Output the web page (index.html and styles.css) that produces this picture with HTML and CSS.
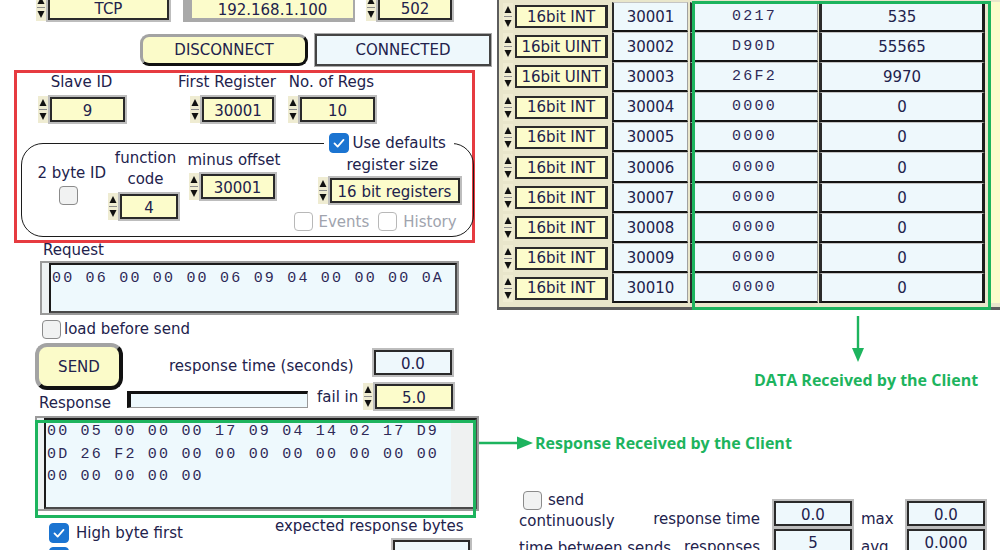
FILE: index.html
```html
<!DOCTYPE html>
<html lang="en">
<head>
  <meta charset="UTF-8">
  <title>Modbus Master</title>
  <link rel="stylesheet" href="styles.css">
</head>
<body>
  <!-- shared glyphs: numeric spinner arrows and the checkbox tick -->
  <svg class="defs" width="0" height="0">
    <symbol id="arrows" viewBox="0 0 10 27">
      <rect width="10" height="27" fill="#efecd2"/>
      <polygon points="1.5,10 5,3 8.5,10" fill="#111"/>
      <line x1="1" y1="13.5" x2="9" y2="13.5" stroke="#8a8a8a"/>
      <polygon points="1.5,17 8.5,17 5,24" fill="#111"/>
    </symbol>
    <symbol id="tick" viewBox="0 0 20 20">
      <polyline points="5,10.5 8.5,14 15,6.5" fill="none" stroke="#fff" stroke-width="2" stroke-linecap="round" stroke-linejoin="round"/>
    </symbol>
  </svg>

  <div class="panel">
    <div class="left">
      <div class="conn-row">
        <svg class="spin"><use href="#arrows" width="100%" height="100%"/></svg>
        <div class="field tcp">TCP</div>
        <div class="ipbox">192.168.1.100</div>
        <svg class="spin port-spin"><use href="#arrows" width="100%" height="100%"/></svg>
        <div class="field port">502</div>
      </div>

      <div class="btn-row">
        <button class="btn disconnect">DISCONNECT</button>
        <div class="status">CONNECTED</div>
      </div>

      <section class="settings">
        <div class="reg-row">
          <div class="reg slave">
            <label>Slave ID</label>
            <div class="num"><svg class="spin"><use href="#arrows" width="100%" height="100%"/></svg><div class="field w75">9</div></div>
          </div>
          <div class="reg first">
            <label>First Register</label>
            <div class="num"><svg class="spin"><use href="#arrows" width="100%" height="100%"/></svg><div class="field w72">30001</div></div>
          </div>
          <div class="reg count">
            <label>No. of Regs</label>
            <div class="num"><svg class="spin"><use href="#arrows" width="100%" height="100%"/></svg><div class="field w75">10</div></div>
          </div>
        </div>

        <fieldset class="options">
          <legend><span class="cb on"><svg><use href="#tick" width="100%" height="100%"/></svg></span>Use defaults</legend>
          <div class="opts">
            <div class="byte">
              <label>2 byte ID</label>
              <span class="cb"></span>
            </div>
            <div class="func">
              <label>function<br>code</label>
              <div class="num"><svg class="spin"><use href="#arrows" width="100%" height="100%"/></svg><div class="field w58">4</div></div>
            </div>
            <div class="offset">
              <label>minus offset</label>
              <div class="num"><svg class="spin"><use href="#arrows" width="100%" height="100%"/></svg><div class="field w74">30001</div></div>
            </div>
            <div class="size">
              <label>register size</label>
              <div class="num"><svg class="spin"><use href="#arrows" width="100%" height="100%"/></svg><div class="field w130">16 bit registers</div></div>
              <div class="checks">
                <span class="cb off"></span><span class="events">Events</span>
                <span class="cb off"></span><span>History</span>
              </div>
            </div>
          </div>
        </fieldset>
      </section>

      <label class="req-label">Request</label>
      <div class="textbox request">
        <div class="text"><div class="lines">00 06 00 00 00 06 09 04 00 00 00 0A</div></div>
      </div>

      <div class="load"><span class="cb"></span>load before send</div>

      <div class="send-row">
        <button class="btn send">SEND</button>
        <span class="caption">response time (seconds)</span>
        <div class="field blue w78">0.0</div>
      </div>

      <div class="resp-row">
        <span class="caption">Response</span>
        <div class="bar"></div>
        <span class="fail">fail in</span>
        <div class="num"><svg class="spin"><use href="#arrows" width="100%" height="100%"/></svg><div class="field w78">5.0</div></div>
      </div>

      <div class="resp-wrap">
        <div class="textbox response">
          <div class="text">
            <div class="lines">00 05 00 00 00 17 09 04 14 02 17 D9
0D 26 F2 00 00 00 00 00 00 00 00 00
00 00 00 00 00</div>
            <div class="gutter"></div>
          </div>
        </div>
        <div class="hilite resp-hilite"></div>
      </div>

      <div class="bottom-row">
        <div class="byte-order">
          <div class="check"><span class="cb on"><svg><use href="#tick" width="100%" height="100%"/></svg></span>High byte first</div>
          <span class="cb on second"><svg><use href="#tick" width="100%" height="100%"/></svg></span>
        </div>
        <div class="expect">
          <span>expected response bytes</span>
          <div class="field blue w77"></div>
        </div>
      </div>
    </div>

    <div class="right">
      <div class="regs">
        <div class="reg-line"><svg class="spin"><use href="#arrows" width="100%" height="100%"/></svg><div class="type">16bit INT</div><div class="cell addr">30001</div><div class="cell hex">0217</div><div class="cell dec">535</div><div class="more"></div></div>
        <div class="reg-line"><svg class="spin"><use href="#arrows" width="100%" height="100%"/></svg><div class="type">16bit UINT</div><div class="cell addr">30002</div><div class="cell hex">D90D</div><div class="cell dec">55565</div><div class="more"></div></div>
        <div class="reg-line"><svg class="spin"><use href="#arrows" width="100%" height="100%"/></svg><div class="type">16bit UINT</div><div class="cell addr">30003</div><div class="cell hex">26F2</div><div class="cell dec">9970</div><div class="more"></div></div>
        <div class="reg-line"><svg class="spin"><use href="#arrows" width="100%" height="100%"/></svg><div class="type">16bit INT</div><div class="cell addr">30004</div><div class="cell hex">0000</div><div class="cell dec">0</div><div class="more"></div></div>
        <div class="reg-line"><svg class="spin"><use href="#arrows" width="100%" height="100%"/></svg><div class="type">16bit INT</div><div class="cell addr">30005</div><div class="cell hex">0000</div><div class="cell dec">0</div><div class="more"></div></div>
        <div class="reg-line"><svg class="spin"><use href="#arrows" width="100%" height="100%"/></svg><div class="type">16bit INT</div><div class="cell addr">30006</div><div class="cell hex">0000</div><div class="cell dec">0</div><div class="more"></div></div>
        <div class="reg-line"><svg class="spin"><use href="#arrows" width="100%" height="100%"/></svg><div class="type">16bit INT</div><div class="cell addr">30007</div><div class="cell hex">0000</div><div class="cell dec">0</div><div class="more"></div></div>
        <div class="reg-line"><svg class="spin"><use href="#arrows" width="100%" height="100%"/></svg><div class="type">16bit INT</div><div class="cell addr">30008</div><div class="cell hex">0000</div><div class="cell dec">0</div><div class="more"></div></div>
        <div class="reg-line"><svg class="spin"><use href="#arrows" width="100%" height="100%"/></svg><div class="type">16bit INT</div><div class="cell addr">30009</div><div class="cell hex">0000</div><div class="cell dec">0</div><div class="more"></div></div>
        <div class="reg-line"><svg class="spin"><use href="#arrows" width="100%" height="100%"/></svg><div class="type">16bit INT</div><div class="cell addr">30010</div><div class="cell hex">0000</div><div class="cell dec">0</div><div class="more"></div></div>
        <div class="hilite data-hilite"></div>
      </div>

      <div class="data-note">
        <svg class="down" viewBox="0 0 14 46">
          <line x1="7" y1="0" x2="7" y2="34" stroke="#1db45e" stroke-width="2.4"/>
          <polygon points="1,32 13,32 7,46" fill="#1db45e"/>
        </svg>
        <div class="note">DATA Received by the Client</div>
      </div>

      <div class="resp-note">
        <svg class="side" viewBox="0 0 55 14">
          <line x1="0" y1="7" x2="41" y2="7" stroke="#1db45e" stroke-width="2.4"/>
          <polygon points="39,0.5 55,7 39,13.5" fill="#1db45e"/>
        </svg>
        <div class="note">Response Received by the Client</div>
      </div>

      <div class="stats">
        <div class="repeat">
          <div class="check"><span class="cb"></span>send</div>
          <div class="cont">continuously</div>
          <div class="between">time between sends</div>
        </div>
        <div class="times">
          <span class="lbl">response time</span>
          <div class="field blue">0.0</div>
          <span class="lbl">max</span>
          <div class="field blue">0.0</div>
          <span class="lbl">responses</span>
          <div class="field blue">5</div>
          <span class="lbl">avg</span>
          <div class="field blue">0.000</div>
        </div>
      </div>
    </div>
  </div>
</body>
</html>
```

FILE: styles.css
```css
body {
  margin: 0;
  width: 1000px;
  height: 550px;
  overflow: hidden;
  background: #fff;
  font-family: "DejaVu Sans", sans-serif;
  font-size: 15px;
  line-height: 18px;
  color: #22224c;
}
.defs {
  position: absolute;
}
.panel {
  display: flex;
}
.left {
  width: 497px;
  flex: none;
}
.right {
  flex: 1;
  min-width: 0;
}

/* numeric controls */
.spin {
  width: 10px;
  height: 27px;
  flex: none;
}
.num {
  display: flex;
  align-items: center;
}
.field {
  box-sizing: border-box;
  height: 25px;
  border: 2px solid #2a2a2a;
  box-shadow: 0 0 0 2px #bdbdbd;
  background: #fcfccb;
  display: flex;
  align-items: center;
  justify-content: center;
  padding-top: 2px;
  white-space: nowrap;
  flex: none;
}
.spin + .field {
  margin-left: 2px;
}
.field.blue {
  background: #eef8fc;
}
.w58 { width: 58px; }
.w72 { width: 72px; }
.w74 { width: 74px; }
.w75 { width: 75px; }
.w77 { width: 77px; }
.w78 { width: 78px; }
.w130 { width: 130px; }

/* checkboxes */
.cb {
  box-sizing: border-box;
  width: 19px;
  height: 19px;
  flex: none;
  border: 1.5px solid #8b8b8b;
  border-radius: 4px;
  background: #f1f2f2;
}
.cb svg {
  display: block;
  width: 100%;
  height: 100%;
}
.cb.on {
  width: 20px;
  height: 20px;
  border-color: #1b74d1;
  background: #1b74d1;
}
.cb.off {
  border-color: #b8b8b8;
  background: #fff;
}

/* buttons */
.btn {
  box-sizing: border-box;
  height: 32px;
  padding: 0;
  background: #fbfbc9;
  border: 3px solid;
  border-color: #a3a3a3 #111 #111 #a3a3a3;
  border-radius: 9px;
  font: inherit;
  color: inherit;
  display: flex;
  align-items: center;
  justify-content: center;
}

/* connection */
.conn-row {
  display: flex;
  align-items: center;
  height: 29px;
  margin-top: -7px;
}
.conn-row > .spin:first-child {
  margin-left: 36px;
}
.tcp {
  width: 121px;
}
.ipbox {
  box-sizing: border-box;
  width: 172px;
  height: 29px;
  margin-left: 14px;
  border: 2px solid #a9a9a9;
  border-left-width: 9px;
  border-bottom-width: 4px;
  background: #fcfccb;
  display: flex;
  align-items: center;
  justify-content: center;
  padding-top: 7px;
}
.port-spin {
  margin-left: 11px;
}
.port {
  width: 74px;
}
.btn-row {
  display: flex;
  margin-top: 12px;
}
.disconnect {
  margin-left: 140px;
  width: 168px;
}
.status {
  box-sizing: border-box;
  margin-left: 7px;
  width: 176px;
  height: 32px;
  border: 2px solid #444;
  box-shadow: 0 0 0 1px #aaa;
  background: #eef8fc;
  display: flex;
  align-items: center;
  justify-content: center;
}

/* query settings */
.settings {
  box-sizing: border-box;
  margin: 4px 0 0 14px;
  width: 461px;
  height: 173px;
  border: 3px solid #e63b40;
}
.reg-row {
  display: flex;
  align-items: flex-start;
}
.reg {
  display: flex;
  flex-direction: column;
}
.reg .num {
  margin-top: 5px;
}
.slave {
  margin-left: 21px;
  width: 87px;
  align-items: center;
}
.first {
  margin-left: 48px;
  width: 103px;
  align-items: flex-end;
}
.count {
  margin-left: 7px;
  width: 94px;
  align-items: flex-end;
}
.first .num,
.count .num {
  margin-right: 2px;
}
.count label {
  padding-right: 3px;
}
.options {
  margin: 10px -2px 0 4px;
  padding: 0;
  min-width: 0;
  border: 1.5px solid #1c1c1c;
  border-radius: 22px;
}
.options legend {
  margin-left: 301.5px;
  padding: 0 8px 0 5px;
  display: flex;
  align-items: center;
  gap: 4px;
}
.opts {
  display: flex;
  align-items: flex-start;
  height: 83px;
}
.byte {
  margin: 11px 0 0 15.5px;
  width: 70px;
  display: flex;
  flex-direction: column;
}
.byte .cb {
  margin: 4px 0 0 21px;
}
.func {
  margin-top: -5px;
  width: 71px;
  display: flex;
  flex-direction: column;
  align-items: center;
}
.func label {
  line-height: 21px;
  text-align: center;
  padding-left: 5px;
}
.func .num {
  margin-top: 3px;
}
.offset {
  margin: -2px 0 0 9px;
  width: 94px;
  display: flex;
  flex-direction: column;
  align-items: flex-start;
}
.offset .num {
  margin: 4px 0 0 1px;
}
.size {
  margin: 3px 0 0 12px;
  width: 168px;
  display: flex;
  flex-direction: column;
  align-items: flex-start;
}
.size label {
  margin-left: 53px;
}
.size .num {
  margin: 3px 0 0 24px;
}
.checks {
  display: flex;
  align-items: center;
  gap: 6px;
  margin-top: 8px;
  color: #a0a4ae;
}
.checks .events {
  margin-right: 3px;
}

/* request / response */
.req-label {
  display: block;
  margin: -2px 0 0 43px;
}
.textbox {
  box-sizing: border-box;
  border: 2px solid #9a9a9a;
  padding-left: 7px;
  background: #eef2f3;
}
.textbox .text {
  box-sizing: border-box;
  height: 100%;
  border: 2px solid;
  border-color: #1a1a1a #4a4a4a #4a4a4a #1a1a1a;
  background: #eef9fd;
}
.lines {
  padding: 1px 0 0 1px;
  font-family: "Liberation Mono", monospace;
  font-size: 15px;
  letter-spacing: 2.2px;
  line-height: 22.5px;
  white-space: pre;
  color: #2e2a58;
}
.request {
  margin: 2px 0 0 40px;
  width: 419px;
  height: 54px;
}
.request .lines {
  padding-top: 3px;
}
.load {
  display: flex;
  align-items: center;
  gap: 3px;
  margin: 4px 0 0 42px;
  height: 20px;
}
.send-row {
  display: flex;
  align-items: flex-start;
  height: 40px;
  margin-top: 4px;
}
.send {
  margin-left: 35px;
  width: 88px;
  height: 47px;
  border-width: 4px;
  border-radius: 12px;
  flex: none;
}
.send-row .caption {
  margin: 14px 0 0 46px;
  width: 186px;
  white-space: nowrap;
}
.send-row .field {
  margin: 7px 0 0 19px;
}
.resp-row {
  display: flex;
  align-items: flex-start;
  height: 27px;
}
.resp-row .caption {
  margin: 11px 0 0 39px;
  width: 88px;
  flex: none;
}
.bar {
  box-sizing: border-box;
  margin-top: 8px;
  width: 181px;
  height: 17px;
  flex: none;
  border: 1px solid #999;
  border-top: 3px solid #111;
  border-left: 4px solid #111;
  background: #eef9fd;
}
.fail {
  margin: 5px 0 0 9px;
  width: 38px;
  flex: none;
  white-space: nowrap;
}
.resp-row .num {
  margin-left: 8px;
}
.resp-wrap {
  position: relative;
  margin: 6px 0 0 35px;
  width: 444px;
}
.response {
  height: 95px;
}
.response .text {
  display: flex;
}
.response .lines {
  flex: 1;
}
.gutter {
  width: 24px;
  background: #eff1f1;
}

/* green call-outs */
.hilite {
  position: absolute;
  box-sizing: border-box;
  border: 3px solid #1db45e;
}
.resp-hilite {
  left: 0;
  top: 4px;
  width: 441px;
  height: 98px;
}
.note {
  font-family: "Open Sans", sans-serif;
  font-weight: 700;
  font-size: 16px;
  line-height: 18px;
  color: #1db45e;
  white-space: nowrap;
}

.bottom-row {
  display: flex;
  align-items: flex-start;
  margin-top: 6px;
}
.byte-order {
  margin: 6px 0 0 49px;
  width: 226px;
  display: flex;
  flex-direction: column;
}
.byte-order .check {
  display: flex;
  align-items: center;
  gap: 7px;
}
.byte-order .second {
  margin-top: 4px;
}
.expect {
  display: flex;
  flex-direction: column;
}
.expect .field {
  margin: 5px 0 0 118px;
}

/* register table */
.regs {
  position: relative;
  width: 520px;
  padding: 1.5px 0 3.5px 4px;
  border-left: 2px solid #5d5d5d;
  border-bottom: 3px solid #5d5d5d;
  background: #e9e6cb;
}
.reg-line {
  display: flex;
  height: 30.2px;
}
.reg-line .spin {
  align-self: center;
}
.type {
  box-sizing: border-box;
  align-self: center;
  margin-left: 2px;
  width: 93px;
  height: 23px;
  border: 2px solid #2b2b2b;
  border-right-width: 3px;
  background: #fcfccb;
  display: flex;
  align-items: center;
  justify-content: center;
  white-space: nowrap;
  flex: none;
}
.cell {
  box-sizing: border-box;
  flex: none;
  border-top: 1px solid #c4c4c4;
  border-left: 2px solid #2b2b2b;
  border-right: 1px solid #a0a0a0;
  border-bottom: 2px solid #141414;
  background: #eef8fc;
  display: flex;
  align-items: center;
  justify-content: center;
  padding-top: 1px;
}
.addr {
  margin-left: 4px;
  width: 76px;
}
.hex {
  margin-left: 2px;
  width: 128px;
  font-family: "Liberation Mono", monospace;
  letter-spacing: 2.2px;
  color: #2e2a58;
}
.dec {
  margin-left: 1px;
  width: 166px;
  border-left-width: 3px;
  border-right: 3px solid #1a1a1a;
}
.more {
  margin-left: 4px;
  width: 40px;
  flex: none;
  background: #fcfccb;
}
.data-hilite {
  left: 193px;
  top: 1px;
  width: 299px;
  height: 309px;
}
.data-note {
  margin-top: 6px;
}
.down {
  display: block;
  margin-left: 354px;
  width: 14px;
  height: 46px;
}
.data-note .note {
  margin: 9px 0 0 257px;
}
.resp-note {
  display: flex;
  align-items: center;
  height: 20px;
  margin: 44px 0 0 -19px;
}
.side {
  width: 55px;
  height: 14px;
  flex: none;
}
.resp-note .note {
  margin-left: 2px;
}

/* continuous send stats */
.stats {
  display: flex;
  margin: 38px 0 0 22px;
}
.repeat {
  width: 134px;
  flex: none;
  white-space: nowrap;
}
.repeat .check {
  display: flex;
  align-items: center;
  gap: 6px;
  margin-left: 4px;
}
.repeat .cont {
  margin-top: 2px;
}
.repeat .between {
  margin-top: 9px;
}
.times {
  margin-top: 9px;
  display: grid;
  grid-template-columns: 107px 92px 41px 92px;
  grid-auto-rows: 28px;
}
.times .lbl {
  justify-self: end;
  align-self: end;
  white-space: nowrap;
}
.times .lbl:nth-child(4n+3) {
  justify-self: start;
  margin-left: 9px;
}
.times .field {
  align-self: center;
  width: 78px;
  margin-left: 14px;
}
```
